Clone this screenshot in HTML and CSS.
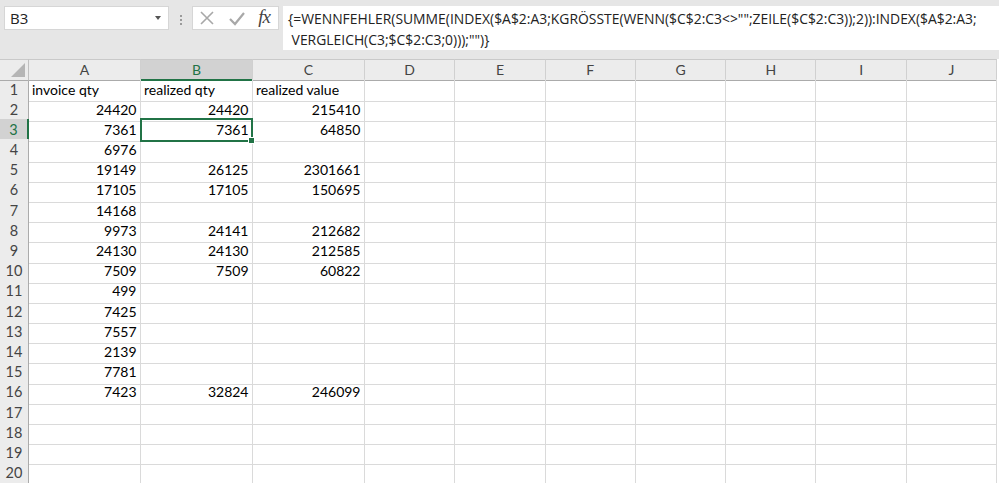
FILE: index.html
```html
<!DOCTYPE html>
<html>
<head>
<meta charset="utf-8">
<link rel="stylesheet" href="styles.css">
</head>
<body>
<div class="toolbar">
  <div class="namebox"><span>B3</span><span class="arrow"></span></div>
  <div class="sep"><span></span><span></span><span></span></div>
  <div class="fxbox">
    <svg class="ic" width="16" height="16" viewBox="0 0 16 16"><path d="M2 2 L14 14 M14 2 L2 14" stroke="#a8a8a8" stroke-width="1.6" fill="none"/></svg>
    <svg class="ic" width="18" height="16" viewBox="0 0 18 16"><path d="M2 9 L7 14 L16 3" stroke="#a8a8a8" stroke-width="2.2" fill="none"/></svg>
    <span class="fx">fx</span>
  </div>
  <div class="formula">{=WENNFEHLER(SUMME(INDEX($A$2:A3;KGRÖSSTE(WENN($C$2:C3&lt;&gt;"";ZEILE($C$2:C3));2)):INDEX($A$2:A3;<br>&nbsp;VERGLEICH(C3;$C$2:C3;0)));"")}</div>
</div>
<div class="sheet">
  <div class="row head"><div class="corner"><span class="tri"></span></div><div class="ch">A</div><div class="ch on">B</div><div class="ch">C</div><div class="ch">D</div><div class="ch">E</div><div class="ch">F</div><div class="ch">G</div><div class="ch">H</div><div class="ch">I</div><div class="ch">J</div></div>
  <div class="row"><div class="rh">1</div><div class="c">invoice qty</div><div class="c">realized qty</div><div class="c">realized value</div><div class="c"></div><div class="c"></div><div class="c"></div><div class="c"></div><div class="c"></div><div class="c"></div><div class="c"></div></div>
  <div class="row"><div class="rh">2</div><div class="c n">24420</div><div class="c n">24420</div><div class="c n">215410</div><div class="c"></div><div class="c"></div><div class="c"></div><div class="c"></div><div class="c"></div><div class="c"></div><div class="c"></div></div>
  <div class="row"><div class="rh on">3</div><div class="c n">7361</div><div class="c n sel">7361</div><div class="c n">64850</div><div class="c"></div><div class="c"></div><div class="c"></div><div class="c"></div><div class="c"></div><div class="c"></div><div class="c"></div></div>
  <div class="row"><div class="rh">4</div><div class="c n">6976</div><div class="c"></div><div class="c"></div><div class="c"></div><div class="c"></div><div class="c"></div><div class="c"></div><div class="c"></div><div class="c"></div><div class="c"></div></div>
  <div class="row"><div class="rh">5</div><div class="c n">19149</div><div class="c n">26125</div><div class="c n">2301661</div><div class="c"></div><div class="c"></div><div class="c"></div><div class="c"></div><div class="c"></div><div class="c"></div><div class="c"></div></div>
  <div class="row"><div class="rh">6</div><div class="c n">17105</div><div class="c n">17105</div><div class="c n">150695</div><div class="c"></div><div class="c"></div><div class="c"></div><div class="c"></div><div class="c"></div><div class="c"></div><div class="c"></div></div>
  <div class="row"><div class="rh">7</div><div class="c n">14168</div><div class="c"></div><div class="c"></div><div class="c"></div><div class="c"></div><div class="c"></div><div class="c"></div><div class="c"></div><div class="c"></div><div class="c"></div></div>
  <div class="row"><div class="rh">8</div><div class="c n">9973</div><div class="c n">24141</div><div class="c n">212682</div><div class="c"></div><div class="c"></div><div class="c"></div><div class="c"></div><div class="c"></div><div class="c"></div><div class="c"></div></div>
  <div class="row"><div class="rh">9</div><div class="c n">24130</div><div class="c n">24130</div><div class="c n">212585</div><div class="c"></div><div class="c"></div><div class="c"></div><div class="c"></div><div class="c"></div><div class="c"></div><div class="c"></div></div>
  <div class="row"><div class="rh">10</div><div class="c n">7509</div><div class="c n">7509</div><div class="c n">60822</div><div class="c"></div><div class="c"></div><div class="c"></div><div class="c"></div><div class="c"></div><div class="c"></div><div class="c"></div></div>
  <div class="row"><div class="rh">11</div><div class="c n">499</div><div class="c"></div><div class="c"></div><div class="c"></div><div class="c"></div><div class="c"></div><div class="c"></div><div class="c"></div><div class="c"></div><div class="c"></div></div>
  <div class="row"><div class="rh">12</div><div class="c n">7425</div><div class="c"></div><div class="c"></div><div class="c"></div><div class="c"></div><div class="c"></div><div class="c"></div><div class="c"></div><div class="c"></div><div class="c"></div></div>
  <div class="row"><div class="rh">13</div><div class="c n">7557</div><div class="c"></div><div class="c"></div><div class="c"></div><div class="c"></div><div class="c"></div><div class="c"></div><div class="c"></div><div class="c"></div><div class="c"></div></div>
  <div class="row"><div class="rh">14</div><div class="c n">2139</div><div class="c"></div><div class="c"></div><div class="c"></div><div class="c"></div><div class="c"></div><div class="c"></div><div class="c"></div><div class="c"></div><div class="c"></div></div>
  <div class="row"><div class="rh">15</div><div class="c n">7781</div><div class="c"></div><div class="c"></div><div class="c"></div><div class="c"></div><div class="c"></div><div class="c"></div><div class="c"></div><div class="c"></div><div class="c"></div></div>
  <div class="row"><div class="rh">16</div><div class="c n">7423</div><div class="c n">32824</div><div class="c n">246099</div><div class="c"></div><div class="c"></div><div class="c"></div><div class="c"></div><div class="c"></div><div class="c"></div><div class="c"></div></div>
  <div class="row"><div class="rh">17</div><div class="c"></div><div class="c"></div><div class="c"></div><div class="c"></div><div class="c"></div><div class="c"></div><div class="c"></div><div class="c"></div><div class="c"></div><div class="c"></div></div>
  <div class="row"><div class="rh">18</div><div class="c"></div><div class="c"></div><div class="c"></div><div class="c"></div><div class="c"></div><div class="c"></div><div class="c"></div><div class="c"></div><div class="c"></div><div class="c"></div></div>
  <div class="row"><div class="rh">19</div><div class="c"></div><div class="c"></div><div class="c"></div><div class="c"></div><div class="c"></div><div class="c"></div><div class="c"></div><div class="c"></div><div class="c"></div><div class="c"></div></div>
  <div class="row"><div class="rh">20</div><div class="c"></div><div class="c"></div><div class="c"></div><div class="c"></div><div class="c"></div><div class="c"></div><div class="c"></div><div class="c"></div><div class="c"></div><div class="c"></div></div>
</div>
</body>
</html>
```
FILE: styles.css
```css
* { box-sizing: border-box; }
html, body { margin: 0; height: 100%; overflow: hidden; }
body {
  background: #fff;
  font-family: Lato, "Liberation Sans", sans-serif;
  color: #111;
}
.toolbar {
  height: 59px;
  background: #e6e6e6;
  display: flex;
  align-items: flex-start;
  padding: 6px 0 0 4px;
}
.namebox {
  width: 165px;
  height: 24px;
  background: #fff;
  border: 1px solid #d6d6d6;
  display: flex;
  align-items: center;
  justify-content: space-between;
  padding: 0 7px 0 5px;
  font: 15px "Open Sans", sans-serif;
  color: #222;
}
.arrow {
  width: 0;
  height: 0;
  border-left: 3px solid transparent;
  border-right: 3px solid transparent;
  border-top: 4px solid #555;
}
.sep {
  width: 23px;
  display: flex;
  flex-direction: column;
  align-items: center;
  gap: 2px;
  padding-top: 9px;
}
.sep span { width: 2px; height: 2px; background: #9a9a9a; }
.fxbox {
  width: 87px;
  height: 24px;
  background: #fff;
  border: 1px solid #d6d6d6;
  display: flex;
  align-items: center;
  justify-content: space-between;
  padding: 0 6px 0 6px;
}
.fx {
  font: italic 19px "Liberation Serif", serif;
  color: #444;
  letter-spacing: -1px;
  padding-right: 2px;
  margin-top: -3px;
}
.formula {
  flex: 1;
  height: 44px;
  margin-left: 4px;
  background: #fff;
  font: 13.9px/21px "Open Sans", sans-serif;
  color: #222;
  padding: 2px 0 0 5px;
  white-space: nowrap;
  overflow: hidden;
}
.sheet { display: flex; flex-direction: column; }
.row {
  display: grid;
  grid-template-columns: 29px 112px 112px 112px repeat(7, 90.3px);
  height: 20.2px;
}
.row.head { height: 19.5px; }
.corner, .ch {
  background: #ececec;
  border-top: 1px solid #c9c9c9;
  border-bottom: 1px solid #ababab;
}
.corner { border-right: 1px solid #c0c0c0; position: relative; }
.tri {
  position: absolute;
  right: 3px;
  bottom: 3px;
  width: 0;
  height: 0;
  border-left: 14px solid transparent;
  border-bottom: 14px solid #b5b5b5;
}
.ch {
  border-right: 1px solid #d0d0d0;
  text-align: center;
  font-size: 14px;
  line-height: 19px;
  color: #444;
}
.ch.on {
  background: #d2d2d2;
  color: #217346;
  border-bottom: 2px solid #217346;
}
.rh {
  background: #ececec;
  border-right: 1px solid #ababab;
  border-bottom: 1px solid #d0d0d0;
  text-align: center;
  font-size: 14.5px;
  line-height: 22px;
  color: #444;
}
.rh.on {
  background: #d2d2d2;
  color: #217346;
  border-right: 2px solid #217346;
}
.c {
  border-right: 1px solid #dadada;
  border-bottom: 1px solid #dadada;
  font-size: 14px;
  line-height: 22.5px;
  padding: 0 3.5px 0 3px;
  white-space: nowrap;
  color: #000;
}
.n { text-align: right; }
.sel { position: relative; }
.sel::before {
  content: "";
  position: absolute;
  left: -1px;
  top: -1px;
  right: -1px;
  bottom: -1px;
  border: 2px solid #217346;
}
.sel::after {
  content: "";
  position: absolute;
  right: -3px;
  bottom: -3px;
  width: 5px;
  height: 5px;
  background: #217346;
  border: 1px solid #fff;
}
```
